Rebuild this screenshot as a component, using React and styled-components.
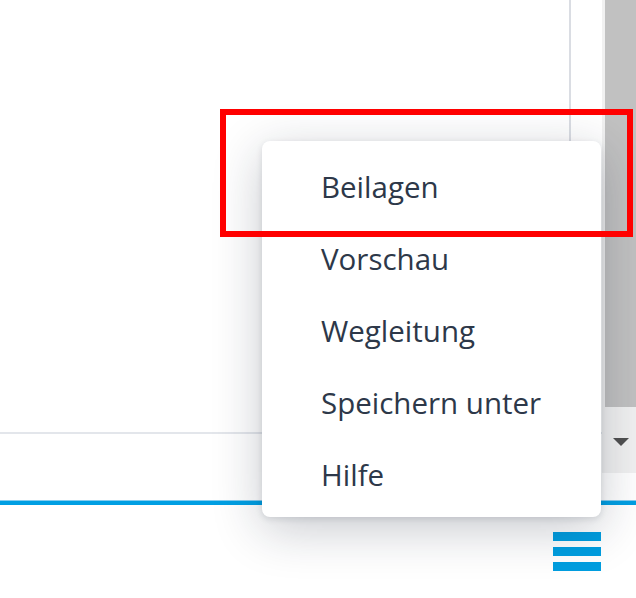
import React from "react";
import styled, { createGlobalStyle } from "styled-components";

const Global = createGlobalStyle`
  html, body { margin: 0; padding: 0; background: #fff; }
  body { font-family: "Open Sans", "Noto Sans", sans-serif; overflow: hidden; }
  #root { width: 636px; height: 598px; }
`;

const Page = styled.div`
  position: relative;
  width: 636px;
  height: 598px;
  display: flex;
  flex-direction: column;
  background: #fff;
  overflow: hidden;
`;

const ScrollRegion = styled.div`
  display: flex;
  height: 473px;
`;

const Content = styled.div`
  flex: 1;
  display: flex;
  flex-direction: column;
`;

const Pane = styled.div`
  display: flex;
  justify-content: flex-end;
  padding-right: 31px;
  border-bottom: 2px solid #e3e6eb;
  box-sizing: border-box;
  height: 434px;
`;

const Divider = styled.div`
  width: 2px;
  background: #dadde3;
`;

const Scrollbar = styled.div`
  width: 34px;
  background: #f1f1f1;
  display: flex;
  flex-direction: column;
`;

const Thumb = styled.div`
  height: 407px;
  margin-left: 3px;
  background: #c1c1c1;
`;

const ArrowButton = styled.div`
  flex: 1;
  display: flex;
  align-items: center;
  justify-content: center;
  padding-left: 3px;
  padding-top: 4px;
  &::after {
    content: "";
    width: 0;
    height: 0;
    border-left: 8px solid transparent;
    border-right: 8px solid transparent;
    border-top: 8px solid #505050;
  }
`;

const Spacer = styled.div`
  height: 27px;
`;

const Footer = styled.div`
  flex: 1;
  border-top: 1px solid #86cdef;
  box-shadow: inset 0 4px 0 #009fe3;
  display: flex;
  justify-content: flex-end;
  align-items: flex-start;
  padding: 31px 35px 0 0;
`;

const Hamburger = styled.button`
  border: 0;
  padding: 0;
  background: transparent;
  width: 48px;
  display: flex;
  flex-direction: column;
  gap: 6px;
  cursor: pointer;
`;

const Bar = styled.span`
  display: block;
  height: 9px;
  background: #009ee0;
`;

const Menu = styled.ul`
  position: absolute;
  left: 262px;
  top: 141px;
  width: 339px;
  height: 376px;
  margin: 0;
  padding: 10px 0 0;
  box-sizing: border-box;
  list-style: none;
  background: #fff;
  border-radius: 8px;
  box-shadow: 0 2px 6px rgba(20, 30, 50, 0.12), 0 12px 50px rgba(20, 30, 50, 0.24);
`;

const Item = styled.li`
  height: 72px;
  line-height: 72px;
  padding-left: 59px;
  font-size: 29.5px;
  color: #2d3849;
  white-space: nowrap;
  cursor: pointer;
`;

const Highlight = styled.div`
  position: absolute;
  left: 220px;
  top: 109px;
  width: 413px;
  height: 128px;
  box-sizing: border-box;
  border: 6px solid #ff0000;
  pointer-events: none;
`;

const items = ["Beilagen", "Vorschau", "Wegleitung", "Speichern unter", "Hilfe"];

export default function App() {
  return (
    <Page>
      <Global />
      <ScrollRegion>
        <Content>
          <Pane>
            <Divider />
          </Pane>
        </Content>
        <Scrollbar>
          <Thumb />
          <ArrowButton />
        </Scrollbar>
      </ScrollRegion>
      <Spacer />
      <Footer>
        <Hamburger aria-label="Menü">
          <Bar />
          <Bar />
          <Bar />
        </Hamburger>
      </Footer>
      <Menu>
        {items.map((t) => (
          <Item key={t}>{t}</Item>
        ))}
      </Menu>
      <Highlight />
    </Page>
  );
}
